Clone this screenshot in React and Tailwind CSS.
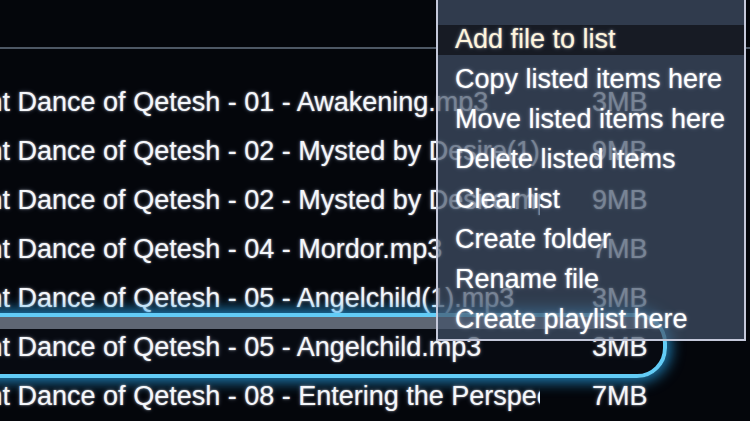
import React from 'react'

const files = [
  { name: 'Ancient Dance of Qetesh - 01 - Awakening.mp3', size: '3MB' },
  { name: 'Ancient Dance of Qetesh - 02 - Mysted by Desire(1).mp3', size: '9MB' },
  { name: 'Ancient Dance of Qetesh - 02 - Mysted by Desire.mp3', size: '9MB' },
  { name: 'Ancient Dance of Qetesh - 04 - Mordor.mp3', size: '7MB' },
  { name: 'Ancient Dance of Qetesh - 05 - Angelchild(1).mp3', size: '3MB' },
  { name: 'Ancient Dance of Qetesh - 05 - Angelchild.mp3', size: '3MB', selected: true },
  { name: 'Ancient Dance of Qetesh - 08 - Entering the Perspective.mp3', size: '7MB' },
]

const menuItems = [
  'Add file to list',
  'Copy listed items here',
  'Move listed items here',
  'Delete listed items',
  'Clear list',
  'Create folder',
  'Rename file',
  'Create playlist here',
]

function FileRow({ file }) {
  return (
    <div className="relative flex h-[49px] items-center">
      {file.selected && (
        <div className="absolute top-[-9px] bottom-[-7px] left-[-20px] w-[687px] rounded-r-[30px] border-[4px] border-[#62ccf6] bg-[linear-gradient(to_bottom,#5e6673_0px,#5e6673_12px,#070a11_12px)] shadow-[0_0_14px_4px_rgba(40,165,235,0.75)]" />
      )}
      <div className="relative w-[540px] overflow-hidden whitespace-nowrap">
        <span className="-ml-[80px] inline-block">{file.name}</span>
      </div>
      <div className="relative pl-[52px]">{file.size}</div>
    </div>
  )
}

export default function App() {
  return (
    <div className="relative h-[421px] w-[750px] overflow-hidden bg-[#04060b] font-['Liberation_Sans',Arial,sans-serif] text-[27px] leading-[40px] text-[#f5f7fb] [text-shadow:0_0_2px_rgba(255,255,255,0.7),0_0_5px_rgba(200,220,255,0.3)]">
      <div className="h-[49px] border-b-2 border-[#4d5764]" />

      <div className="pt-[28px]">
        {files.map((f, i) => (
          <FileRow key={i} file={f} />
        ))}
      </div>

      {/* context menu, semi-transparent so the list ghosts through */}
      <div className="absolute top-0 left-[436px] z-20 w-[310px] border-x-2 border-b-2 border-[#c4c8da] bg-[#435269]/70 pt-[19px]">
        {menuItems.map((label, i) => (
          <div
            key={label}
            className={
              i === 0
                ? 'flex h-[40px] items-center whitespace-nowrap bg-[linear-gradient(to_bottom,transparent_6px,#171b24_6px,#171b24_36px,transparent_36px)] pl-[17px] text-[#fff5dc]'
                : 'flex h-[40px] items-center whitespace-nowrap pl-[17px] text-white'
            }
          >
            {label}
          </div>
        ))}
      </div>
    </div>
  )
}
